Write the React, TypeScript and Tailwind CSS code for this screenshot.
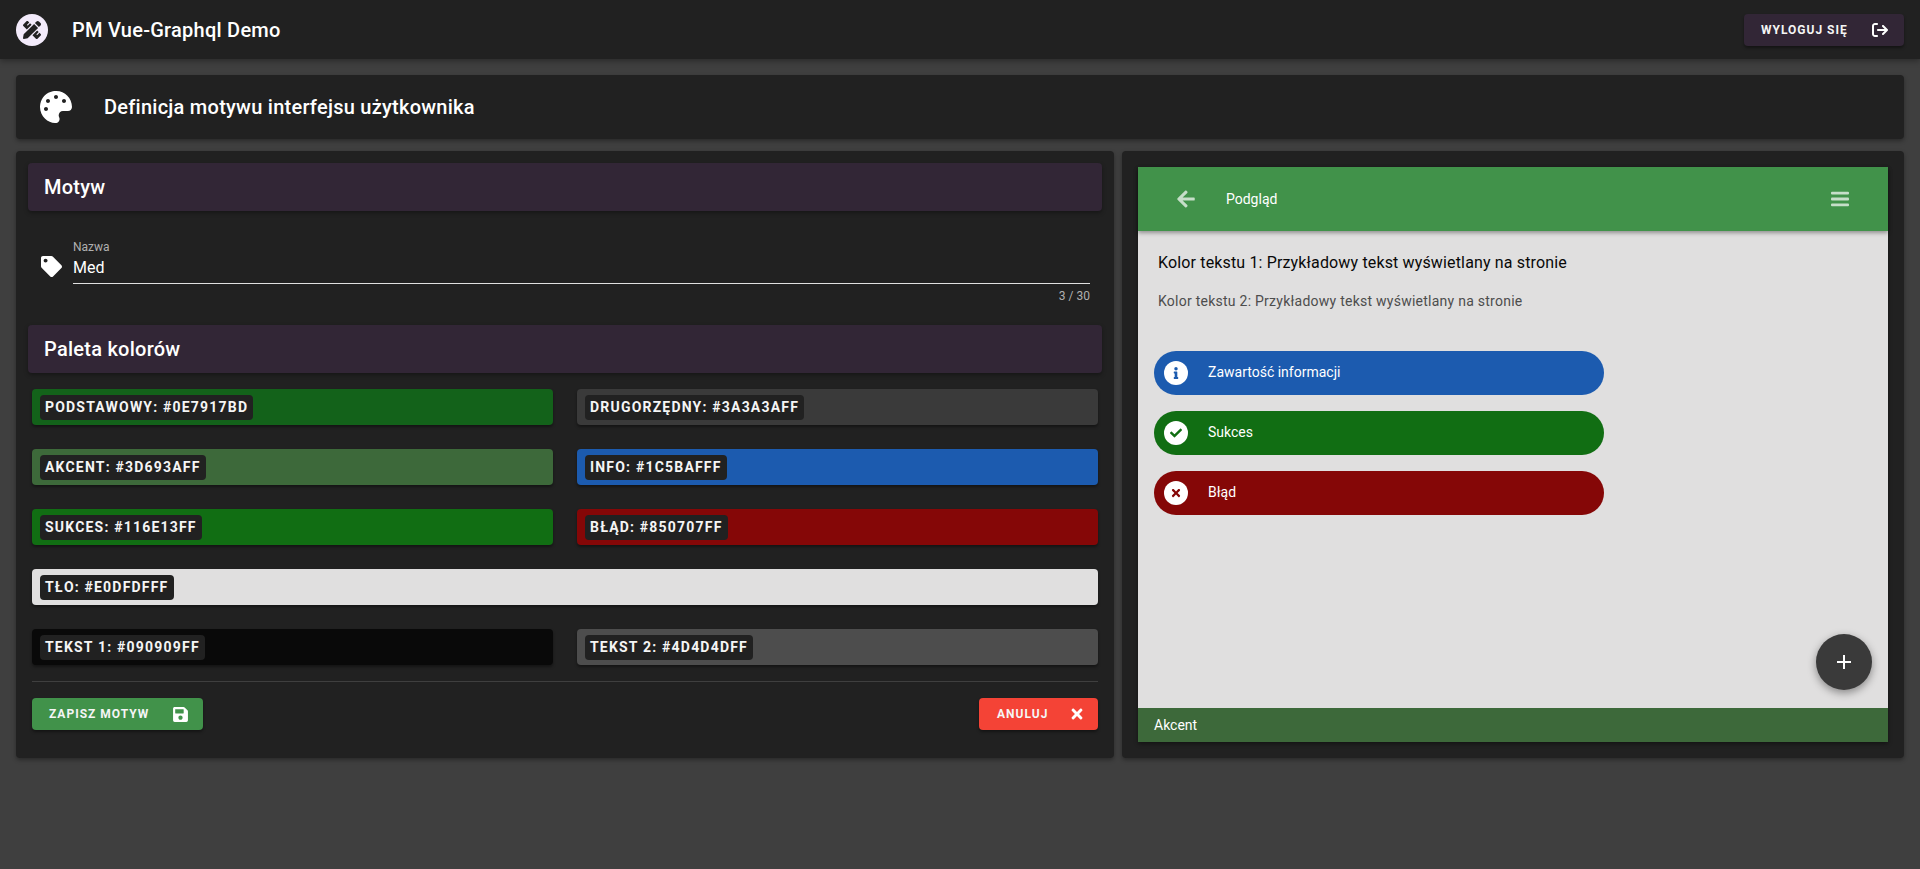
import type { ReactNode } from 'react';
import { Plus } from 'lucide-react';
import {
  FaPalette,
  FaTag,
  FaSave,
  FaTimes,
  FaArrowLeft,
  FaInfo,
  FaCheck,
  FaPencilRuler,
} from 'react-icons/fa';
import { FaArrowRightFromBracket } from 'react-icons/fa6';

function SectionHeader({ title }: { title: string }) {
  return (
    <div className="flex h-12 items-center rounded bg-[#322636] pl-4 text-[20px] font-medium tracking-[0.25px] text-white shadow-[0_2px_4px_rgba(0,0,0,0.35)]">
      {title}
    </div>
  );
}

function Swatch({ label, color, wide }: { label: string; color: string; wide?: boolean }) {
  return (
    <div
      className={`flex h-9 items-center rounded pl-2 shadow-[0_2px_3px_rgba(0,0,0,0.4)] ${wide ? 'col-span-2' : ''} ${color}`}
    >
      <span className="flex h-[25px] items-center rounded bg-[#212121] px-[5px] text-[14px] font-bold tracking-[1.2px] text-[#f5f5f5]">
        {label}
      </span>
    </div>
  );
}

function Pill({ icon, text, color }: { icon: ReactNode; text: string; color: string }) {
  return (
    <div className={`flex h-11 w-[450px] items-center rounded-[22px] pl-[10px] text-[14px] text-white ${color}`}>
      <span className="flex h-6 w-6 items-center justify-center rounded-full bg-white">{icon}</span>
      <span className="ml-5 pb-[2px]">{text}</span>
    </div>
  );
}

export default function App() {
  return (
    <div className="flex h-[869px] flex-col overflow-hidden bg-[#3f3f3f] font-['Roboto',sans-serif]">
      {/* Top bar */}
      <header className="flex h-[59px] shrink-0 items-center bg-[#212121] pl-4 pr-4 shadow-[0_2px_6px_rgba(0,0,0,0.35)]">
        <div className="flex h-8 w-8 items-center justify-center rounded-full bg-[#f3ebfb] text-[#212121]">
          <FaPencilRuler className="h-[18px] w-[18px]" />
        </div>
        <div className="ml-6 text-[20px] font-medium tracking-[0.25px] text-white">PM Vue-Graphql Demo</div>
        <button className="ml-auto flex h-8 w-40 items-center rounded bg-[#322636] pl-[17px] text-[12px] font-bold tracking-[1px] text-[#f5f5f5] shadow-[0_2px_3px_rgba(0,0,0,0.4)]">
          WYLOGUJ SIĘ
          <FaArrowRightFromBracket className="ml-auto mr-4 h-4 w-4 text-white" />
        </button>
      </header>

      <main className="flex flex-col gap-3 px-4 pt-4">
        {/* Page title */}
        <div className="flex h-16 items-center rounded bg-[#212121] pl-6 shadow-[0_2px_4px_rgba(0,0,0,0.35)]">
          <FaPalette className="h-8 w-8 text-white" />
          <h1 className="ml-8 text-[20px] font-medium tracking-[0.25px] text-white">
            Definicja motywu interfejsu użytkownika
          </h1>
        </div>

        <div className="flex gap-2">
          {/* Editor */}
          <section className="h-[607px] w-[1098px] shrink-0 rounded bg-[#212121] px-3 pt-3 shadow-[0_2px_4px_rgba(0,0,0,0.35)]">
            <SectionHeader title="Motyw" />

            <div className="ml-[13px] mr-3 mt-7 flex">
              <FaTag className="mt-[17px] h-[21px] w-[21px] shrink-0 text-white" />
              <div className="ml-[11px] flex-1">
                <div className="h-4 text-[12px] leading-4 text-[#b0b0b0]">Nazwa</div>
                <div className="h-[29px] border-b border-[#e0e0e0] pt-px text-[16px] leading-6 text-white">Med</div>
                <div className="mt-1 h-4 text-right text-[12px] leading-4 text-[#b0b0b0]">3 / 30</div>
              </div>
            </div>

            <div className="mt-[21px]">
              <SectionHeader title="Paleta kolorów" />
            </div>

            <div className="mx-1 mt-4 grid grid-cols-2 gap-x-6 gap-y-6">
              <Swatch label="PODSTAWOWY: #0E7917BD" color="bg-[#13621a]" />
              <Swatch label="DRUGORZĘDNY: #3A3A3AFF" color="bg-[#3a3a3a]" />
              <Swatch label="AKCENT: #3D693AFF" color="bg-[#3d693a]" />
              <Swatch label="INFO: #1C5BAFFF" color="bg-[#1c5baf]" />
              <Swatch label="SUKCES: #116E13FF" color="bg-[#116e13]" />
              <Swatch label="BŁĄD: #850707FF" color="bg-[#850707]" />
              <Swatch label="TŁO: #E0DFDFFF" color="bg-[#e0dfdf]" wide />
              <Swatch label="TEKST 1: #090909FF" color="bg-[#090909]" />
              <Swatch label="TEKST 2: #4D4D4DFF" color="bg-[#4d4d4d]" />
            </div>

            <div className="mx-1 mt-4 border-t border-[#3f3f3f]" />

            <div className="mx-1 mt-4 flex justify-between">
              <button className="flex h-8 w-[171px] items-center rounded bg-[#41924a] pl-[17px] text-[12px] font-bold tracking-[1px] text-[#f5f5f5] shadow-[0_2px_3px_rgba(0,0,0,0.4)]">
                ZAPISZ MOTYW
                <FaSave className="ml-auto mr-[14px] h-[17px] w-[17px] text-white" />
              </button>
              <button className="flex h-8 w-[119px] items-center rounded bg-[#f44336] pl-[18px] text-[12px] font-bold tracking-[1px] text-[#f5f5f5] shadow-[0_2px_3px_rgba(0,0,0,0.4)]">
                ANULUJ
                <FaTimes className="ml-auto mr-[13px] h-4 w-4 text-white" />
              </button>
            </div>
          </section>

          {/* Preview */}
          <section className="flex h-[607px] w-[782px] shrink-0 flex-col rounded bg-[#212121] p-4 shadow-[0_2px_4px_rgba(0,0,0,0.35)]">
            <div className="relative flex flex-1 flex-col bg-[#e0dfdf] shadow-[0_2px_4px_rgba(0,0,0,0.4)]">
              <div className="flex h-16 shrink-0 items-center bg-[#41924a] pl-[38px] pr-[39px] text-[14px] text-white shadow-[0_2px_4px_rgba(0,0,0,0.35)]">
                <FaArrowLeft className="h-5 w-5 text-white/70" />
                <span className="ml-[30px]">Podgląd</span>
                <svg className="ml-auto h-4 w-[18px] text-white/70" viewBox="0 0 18 16" fill="currentColor">
                  <rect x="0" y="0.8" width="18" height="2.8" rx="1" />
                  <rect x="0" y="6.6" width="18" height="2.8" rx="1" />
                  <rect x="0" y="12.4" width="18" height="2.8" rx="1" />
                </svg>
              </div>

              <div className="flex-1 px-4">
                <p className="ml-1 mt-[23px] text-[16px] leading-[18px] tracking-[0.15px] text-[#090909]">
                  Kolor tekstu 1: Przykładowy tekst wyświetlany na stronie
                </p>
                <p className="ml-1 mt-5 text-[14px] leading-[18px] tracking-[0.25px] text-[#4d4d4d]">
                  Kolor tekstu 2: Przykładowy tekst wyświetlany na stronie
                </p>
                <div className="mt-[41px] flex flex-col gap-4">
                  <Pill text="Zawartość informacji" color="bg-[#1c5baf]" icon={<FaInfo className="h-3 w-3 text-[#1c5baf]" />} />
                  <Pill text="Sukces" color="bg-[#116e13]" icon={<FaCheck className="h-3 w-3 text-[#116e13]" />} />
                  <Pill text="Błąd" color="bg-[#850707]" icon={<FaTimes className="h-3 w-3 text-[#850707]" />} />
                </div>
              </div>

              <button className="absolute bottom-[52px] right-4 flex h-14 w-14 items-center justify-center rounded-full bg-[#3a3a3a] text-white shadow-[0_3px_8px_rgba(0,0,0,0.4)]">
                <Plus size={24} strokeWidth={2} strokeLinecap="butt" />
              </button>

              <div className="flex h-[34px] shrink-0 items-center bg-[#3d693a] pl-4 text-[14px] text-white">Akcent</div>
            </div>
          </section>
        </div>
      </main>
    </div>
  );
}
